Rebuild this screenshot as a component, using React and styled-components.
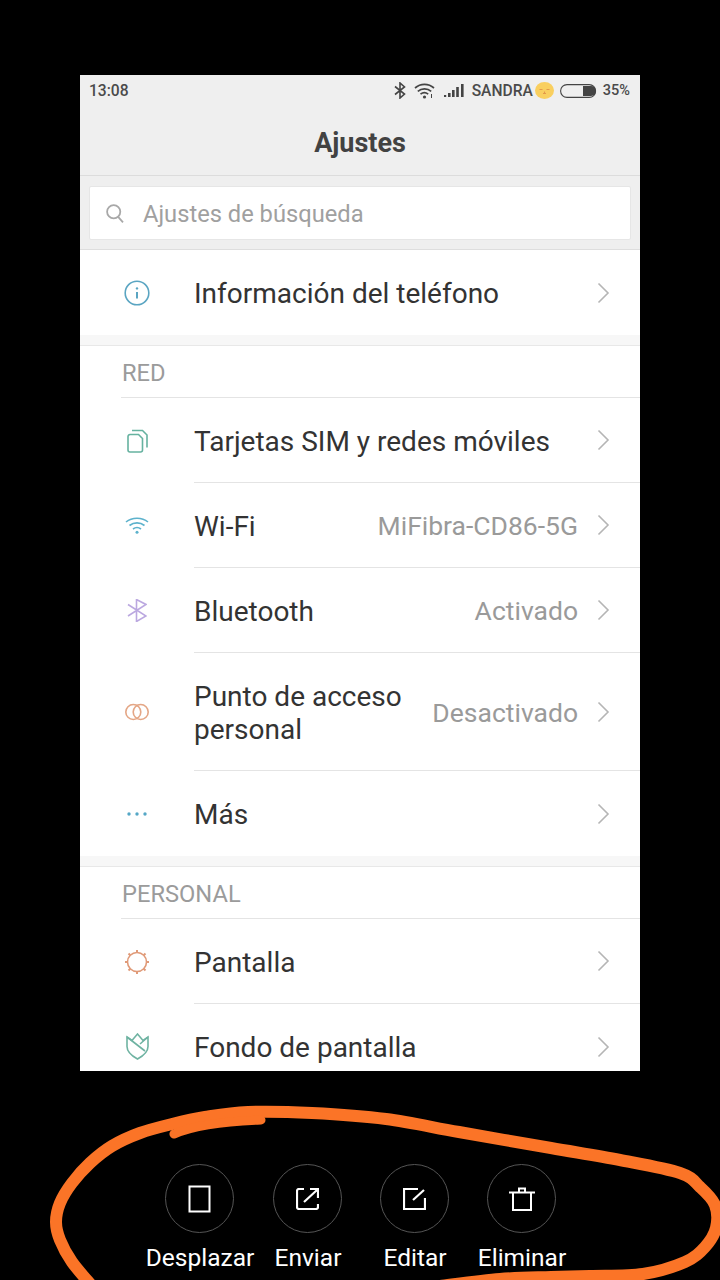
import React from "react";
import styled, { createGlobalStyle } from "styled-components";

const Global = createGlobalStyle`
  html, body { margin: 0; padding: 0; background: #000; }
  body { font-family: Roboto, "Noto Sans", sans-serif; }
  #root { height: 1280px; overflow: hidden; }
`;
const Page = styled.div`
  position: relative; width: 720px; height: 1280px; background: #000; overflow: hidden;
  display: flex; flex-direction: column; align-items: center; padding-top: 75px; box-sizing: border-box;
`;
const Phone = styled.div`
  width: 560px; height: 996px; background: #f7f7f7; overflow: hidden; flex: none;
`;
const StatusBar = styled.div`
  height: 30px; background: #efefef; display: flex; align-items: center; padding: 1px 10px 0 9px; color: #4a4a4a;
  font-size: 15.6px; font-weight: 500; box-sizing: border-box;
`;
const Clock = styled.span` flex: 1; `;
const StatusRight = styled.div` display: flex; align-items: center; `;
const Carrier = styled.span` font-size: 15.6px; font-weight: 500; margin-left: 8px; `;
const Battery = styled.span` font-size: 14.5px; font-weight: 500; margin-left: 5px; `;
const Header = styled.div`
  height: 71px; background: #efefef; border-bottom: 1px solid #dcdcdc; display: flex; align-items: center;
  justify-content: center; font-size: 27px; font-weight: 700; color: #424242; box-sizing: border-box; padding-top: 6px;
`;
const SearchWrap = styled.div`
  background: #efefef; padding: 10px 9px 9px; border-bottom: 1px solid #dedede;
`;
const SearchBox = styled.div`
  height: 54px; background: #fff; border: 1px solid #e6e6e6; box-sizing: border-box; display: flex; align-items: center;
  padding-left: 16px; gap: 19px; font-size: 23.7px; color: #a0a0a0; border-radius: 2px;
`;
const SearchText = styled.span` padding-top: 2px; `;
const Section = styled.div`
  background: #fff; border-top: ${p => (p.$top ? "1px solid #e8e8e8" : "none")};
  margin-bottom: ${p => p.$gap || 0}px;
`;
const SectionLabel = styled.div`
  height: 52px; margin-left: 41px; border-bottom: 1px solid #e4e4e4; display: flex; align-items: center;
  font-size: 23.7px; color: #9b9b9b; padding: 2px 0 0 1px; box-sizing: border-box;
`;
const Row = styled.div`
  height: ${p => p.$h}px; display: flex; align-items: center; box-sizing: border-box; flex: none;
`;
const IconSlot = styled.div`
  width: 114px; flex: none; display: flex; justify-content: center; box-sizing: border-box;
`;
const RowBody = styled.div`
  flex: 1; height: 100%; display: flex; align-items: center; padding-right: 30px;
  border-bottom: ${p => (p.$line ? "1px solid #e4e4e4" : "none")}; box-sizing: border-box; min-width: 0;
`;
const RowTitle = styled.div`
  flex: 1; font-size: 28px; line-height: 33px; color: #333; white-space: pre-line; padding-top: 2px;
`;
const RowValue = styled.div`
  font-size: 26.5px; color: #9a9a9a; margin-right: 19px; padding-top: 1px;
`;
const Bottom = styled.div`
  display: flex; margin-top: 93px; width: 720px; flex: none; height: 116px; box-sizing: border-box; padding-left: 146px;
`;
const Action = styled.div`
  width: ${p => p.$w}px; display: flex; flex-direction: column; align-items: center; flex: none;
`;
const Circle = styled.div`
  width: 69px; height: 69px; border-radius: 50%; border: 1px solid #555; box-sizing: border-box; margin-right: 1px;
  display: flex; align-items: center; justify-content: center;
`;
const ActionLabel = styled.div`
  color: #fff; font-size: 24.5px; line-height: 28px; margin-top: 11px; white-space: nowrap;
`;
const Scribble = styled.svg`
  position: absolute; left: 0; top: 0; pointer-events: none;
`;

const Chevron = () => (
  <svg width="13" height="22" viewBox="0 0 13 22" fill="none" stroke="#b5b5b5" strokeWidth="1.6"><path d="M1.500 1.500 11 11 1.500 20.500" /></svg>
);
const SearchIcon = () => (
  <svg width="18" height="19" viewBox="0 0 18 19" fill="none" stroke="#a8a8a8" strokeWidth="1.8"><circle cx="7.700" cy="7.700" r="6.600" /><path d="M12.200 12.800 17 18.300" /></svg>
);
const S = { fill: "none", strokeWidth: 1.6 };
const Info = () => (
  <svg width="26" height="26" viewBox="0 0 26 26" {...S} stroke="#5aa5c2"><circle cx="13" cy="13" r="11.800" /><path d="M13 12v6.500" strokeWidth="2" /><circle cx="13" cy="8.400" r="1.200" fill="#5aa5c2" stroke="none" /></svg>
);
const Sim = () => (
  <svg width="21" height="24" viewBox="0 0 21 24" {...S} stroke="#66b2a0"><path d="M3 5.500h8.500l4 4V21a2 2 0 0 1-2 2H3a2 2 0 0 1-2-2V7.500a2 2 0 0 1 2-2z" /><path d="M5 1.500h10.500l4.500 4.500v12.500" /></svg>
);
const WifiColor = () => (
  <svg width="24" height="17" viewBox="0 0 24 17" {...S} stroke="#5db2cc"><path d="M1 5C7 0 17 0 23 5" /><path d="M4.500 8.500c4.500-3.500 10.500-3.500 15 0" /><path d="M8 12c2.300-1.700 5.700-1.700 8 0" /><circle cx="12" cy="15.300" r="1.500" fill="#5db2cc" stroke="none" /></svg>
);
const Bt = () => (
  <svg width="20" height="23" viewBox="0 0 20 23" {...S} stroke="#bba8e0"><path d="M1 5.500 19 17 9.500 22.500V.5L19 5.500 1 17" /></svg>
);
const Rings = () => (
  <svg width="24" height="18" viewBox="0 0 24 18" {...S} stroke="#e4a685"><circle cx="8.300" cy="9" r="7.500" /><circle cx="15.700" cy="9" r="7.500" /></svg>
);
const Dots = () => (
  <svg width="22" height="6" viewBox="0 0 22 6" fill="#55a7c6"><circle cx="3" cy="3" r="1.700" /><circle cx="11" cy="3" r="1.700" /><circle cx="19" cy="3" r="1.700" /></svg>
);
const Sun = () => {
  const rays = [0, 45, 90, 135, 180, 225, 270, 315];
  return (
    <svg width="26" height="26" viewBox="0 0 26 26" {...S} stroke="#e09a78">
      <circle cx="13" cy="13" r="9.500" />
      {rays.map(a => <path key={a} d="M13 1v2.500" strokeWidth="2" transform={`rotate(${a} 13 13)`} />)}
    </svg>
  );
};
const Tulip = () => (
  <svg width="23" height="27" viewBox="0 0 23 27" {...S} stroke="#6fb3a2"><path d="M1 4v9.500c0 6 5 9.500 10.500 12.500 5.500-3 10.500-6.500 10.500-12.500V4L17 7.500 11.500 1 6 7.500z" /><path d="M1 4 19 18M22 4 14 11" /></svg>
);

const BtSmall = () => (
  <svg width="12" height="17" viewBox="0 0 12 17" fill="none" stroke="#444" strokeWidth="1.600"><path d="M1 4.500 10.500 12 6 16V1l4.500 4L1 12.500" /></svg>
);
const WifiSmall = () => (
  <svg width="21" height="16" viewBox="0 0 21 16" fill="none" stroke="#444" strokeWidth="1.700" style={{ marginLeft: 8 }}><path d="M1 5c5.500-4.800 13.500-4.800 19 0M3.800 8.300c3.800-3.200 9.600-3.200 13.400 0M6.500 11.200c2.200-1.700 5.500-1.700 7.700 0" /><circle cx="10.500" cy="14" r="1.600" fill="#444" stroke="none" /><path d="M17.500 11v4" strokeWidth="1" /></svg>
);
const Signal = () => (
  <svg width="20" height="13" viewBox="0 0 20 13" fill="#444" style={{ marginLeft: 9 }}><rect x="0" y="11" width="2.200" height="2" /><rect x="4" y="9" width="2.600" height="4" /><rect x="8" y="6" width="2.600" height="7" /><rect x="12.200" y="3" width="2.600" height="10" /><rect x="17" y="0" width="2.600" height="13" /></svg>
);
const Emoji = () => (
  <svg width="19" height="17" viewBox="0 0 19 17" style={{ marginLeft: 2 }}><ellipse cx="9.500" cy="8.500" rx="9.500" ry="8.500" fill="#f9cf5f" /><path d="M4.500 7.500h3M11.500 7.500h3M9.500 9.500v2M8 11.500h3" stroke="#e39a4a" strokeWidth="1.100" fill="none" /></svg>
);
const BatteryIcon = () => (
  <svg width="38" height="14" viewBox="0 0 38 14" style={{ marginLeft: 6 }}><rect x=".6" y=".6" width="35" height="12.800" rx="6.400" fill="none" stroke="#444" strokeWidth="1.100" /><path d="M23 2h8a5 5 0 0 1 0 10h-8z" fill="#444" /></svg>
);

const Phone2 = () => (
  <svg width="23" height="28" viewBox="0 0 23 28" fill="none" stroke="#fff" strokeWidth="2"><rect x="1.500" y="1.500" width="20" height="25" /></svg>
);
const Send = () => (
  <svg width="23" height="22" viewBox="0 0 23 22" fill="none" stroke="#fff" strokeWidth="2.200"><path d="M8 1H3a2 2 0 0 0-2 2v16a2 2 0 0 0 2 2h17a2 2 0 0 0 2-2v-3" /><path d="M8 14 21 2M14 1h8v9" /></svg>
);
const Edit = () => (
  <svg width="23" height="22" viewBox="0 0 23 22" fill="none" stroke="#fff" strokeWidth="2.200"><path d="M15 1H1v20h21V10" /><path d="M10 12 21 2" /></svg>
);
const Trash = () => (
  <svg width="26" height="24" viewBox="0 0 26 24" fill="none" stroke="#fff" strokeWidth="2"><path d="M0 5.500h26M4 5.500V23h18V5.500M10 5.500V1.500h6v4" /></svg>
);

const items = [{ icon: <Info />, h: 85, t: "Información del teléfono" }];
const red = [
  { icon: <Sim />, h: 85, t: "Tarjetas SIM y redes móviles", line: true },
  { icon: <WifiColor />, h: 85, t: "Wi-Fi", v: "MiFibra-CD86-5G", line: true },
  { icon: <Bt />, h: 85, t: "Bluetooth", v: "Activado", line: true },
  { icon: <Rings />, h: 118, t: "Punto de acceso\npersonal", v: "Desactivado", line: true },
  { icon: <Dots />, h: 85, t: "Más" },
];
const personal = [
  { icon: <Sun />, h: 85, t: "Pantalla", line: true },
  { icon: <Tulip />, h: 85, t: "Fondo de pantalla" },
];
const SettingRow = ({ icon, h, t, v, line }) => (
  <Row $h={h}>
    <IconSlot>{icon}</IconSlot>
    <RowBody $line={line}>
      <RowTitle>{t}</RowTitle>
      {v && <RowValue>{v}</RowValue>}
      <Chevron />
    </RowBody>
  </Row>
);

const actions = [
  { l: "Desplazar", w: 108, icon: <Phone2 /> },
  { l: "Enviar", w: 108, icon: <Send /> },
  { l: "Editar", w: 106, icon: <Edit /> },
  { l: "Eliminar", w: 108, icon: <Trash /> },
];

const pts = [[92,1286],[72,1262],[60,1240],[56,1222],[60,1203],[72,1183],[90,1163],[112,1146],[140,1133],[172,1124],[205,1117],[248,1112],[312,1113],[386,1119],[459,1132],[551,1148],[620,1160],[680,1173],[700,1187],[715,1205],[716,1228],[705,1247],[685,1262],[643,1274],[590,1276],[551,1277],[500,1279],[440,1286]];
const smooth = p => {
  let d = `M${p[0][0]} ${p[0][1]}`;
  for (let i = 0; i < p.length - 1; i++) {
    const a = p[Math.max(i - 1, 0)], b = p[i], c = p[i + 1], e = p[Math.min(i + 2, p.length - 1)];
    d += `C${b[0] + (c[0] - a[0]) / 6} ${b[1] + (c[1] - a[1]) / 6} ${c[0] - (e[0] - b[0]) / 6} ${c[1] - (e[1] - b[1]) / 6} ${c[0]} ${c[1]}`;
  }
  return d;
};

export default function App() {
  return (
    <Page>
      <Global />
      <Phone>
        <StatusBar>
          <Clock>13:08</Clock>
          <StatusRight>
            <BtSmall /><WifiSmall /><Signal />
            <Carrier>SANDRA</Carrier><Emoji /><BatteryIcon /><Battery>35%</Battery>
          </StatusRight>
        </StatusBar>
        <Header>Ajustes</Header>
        <SearchWrap>
          <SearchBox><SearchIcon /><SearchText>Ajustes de búsqueda</SearchText></SearchBox>
        </SearchWrap>
        <Section $gap={10}>
          {items.map(i => <SettingRow key={i.t} {...i} />)}
        </Section>
        <Section $top $gap={10}>
          <SectionLabel>RED</SectionLabel>
          {red.map(i => <SettingRow key={i.t} {...i} />)}
        </Section>
        <Section $top>
          <SectionLabel>PERSONAL</SectionLabel>
          {personal.map(i => <SettingRow key={i.t} {...i} />)}
        </Section>
      </Phone>
      <Bottom>
        {actions.map(a => (
          <Action key={a.l} $w={a.w}>
            <Circle>{a.icon}</Circle>
            <ActionLabel>{a.l}</ActionLabel>
          </Action>
        ))}
      </Bottom>
      <Scribble width="720" height="1280" viewBox="0 0 720 1280" fill="none">
        <path d={smooth(pts)} stroke="#fb7427" strokeWidth="12" strokeLinecap="round" strokeLinejoin="round" />
        <path d="M174 1134C195 1125 230 1121 261 1120" stroke="#fb7427" strokeWidth="9" strokeLinecap="round" />
      </Scribble>
    </Page>
  );
}
